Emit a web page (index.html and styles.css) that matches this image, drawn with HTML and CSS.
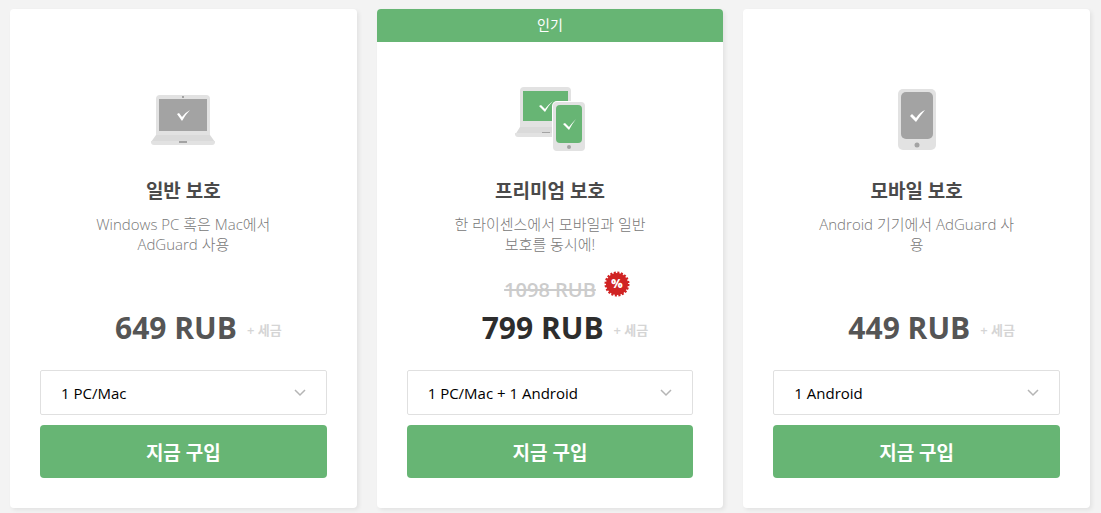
FILE: index.html
```
<!DOCTYPE html>
<html lang="ko">
<head>
    <meta charset="UTF-8">
    <meta name="viewport" content="width=device-width, initial-scale=1.0">
    <title>AdGuard</title>
    <link rel="stylesheet" href="styles.css">
</head>
<body>
    <main class="plans">
        <section class="plan">
            <form class="plan-body">
                <svg class="plan-icon" width="72" height="64" viewBox="0 0 72 64" aria-hidden="true">
                    <path fill="#e2e2e2" d="M9 50V12q0-4 4-4h46q4 0 4 4v38z"/>
                    <path fill="#dadada" d="M9 48h54l5 7H4z"/>
                    <path fill="#e2e2e2" d="M4 54h64v1q0 3-3 3H7q-3 0-3-3z"/>
                    <path fill="#a3a3a3" d="M12 12h48v32H12zM35 9h2v2h-2zM32 54h8v2h-8z"/>
                    <path fill="#fff" d="M30 27l2-1 3 4q4-5 8-7-4 4-8 11z"/>
                </svg>
                <h2>일반 보호</h2>
                <p class="description">Windows PC 혹은 Mac에서<br>AdGuard 사용</p>
                <div class="old-price"></div>
                <div class="price">649 RUB <small>+ 세금</small></div>
                <select aria-label="일반 보호">
                    <option>1 PC/Mac</option>
                </select>
                <button type="submit">지금 구입</button>
            </form>
        </section>

        <section class="plan popular">
            <div class="plan-label">인기</div>
            <form class="plan-body">
                <svg class="plan-icon" width="72" height="64" viewBox="0 0 72 64" aria-hidden="true">
                    <path fill="#e2e2e2" d="M6 42V4q0-4 4-4h43q4 0 4 4v38z"/>
                    <path fill="#dadada" d="M6 40h53v8H1z"/>
                    <path fill="#e2e2e2" d="M1 46h58v4H4q-3 0-3-3z"/>
                    <path fill="#67b574" d="M9 4h45v30H9z"/>
                    <path fill="#a3a3a3" d="M28 45h8v1h-8z"/>
                    <path fill="#fff" d="M25 19l2-1 4 4q4-5 8-8-5 5-8 11z"/>
                    <rect fill="#fff" x="38" y="14" width="34" height="50" rx="5"/>
                    <rect fill="#e2e2e2" x="39" y="15" width="32" height="49" rx="4"/>
                    <rect fill="#67b574" x="42" y="18" width="26" height="38" rx="4"/>
                    <circle fill="#a3a3a3" cx="55" cy="60" r="2"/>
                    <path fill="#fff" d="M49 37l2-1 4 4q4-5 7-8-4 5-7 11z"/>
                </svg>
                <h2>프리미엄 보호</h2>
                <p class="description">한 라이센스에서 모바일과 일반<br>보호를 동시에!</p>
                <div class="old-price">
                    <del>1098 RUB</del>
                    <span class="discount">
                        <svg width="26" height="26" viewBox="-13 -13 26 26" aria-hidden="true">
                            <circle fill="#d02323" r="11"/>
                            <circle fill="none" stroke="#d02323" stroke-width="3" stroke-dasharray="2 1.455" r="11"/>
                        </svg>
                        <b>%</b>
                    </span>
                </div>
                <div class="price">799 RUB <small>+ 세금</small></div>
                <select aria-label="프리미엄 보호">
                    <option>1 PC/Mac + 1 Android</option>
                </select>
                <button type="submit">지금 구입</button>
            </form>
        </section>

        <section class="plan">
            <form class="plan-body">
                <svg class="plan-icon" width="72" height="64" viewBox="0 0 72 64" aria-hidden="true">
                    <rect fill="#e2e2e2" x="17" y="2" width="38" height="61" rx="5"/>
                    <rect fill="#a3a3a3" x="20" y="5" width="32" height="47" rx="5"/>
                    <circle fill="#a3a3a3" cx="36" cy="58" r="2.5"/>
                    <path fill="#fff" d="M29 29l2-2 4 4q4-6 9-8-5 6-9 12z"/>
                </svg>
                <h2>모바일 보호</h2>
                <p class="description">Android 기기에서 AdGuard 사<br>용</p>
                <div class="old-price"></div>
                <div class="price">449 RUB <small>+ 세금</small></div>
                <select aria-label="모바일 보호">
                    <option>1 Android</option>
                </select>
                <button type="submit">지금 구입</button>
            </form>
        </section>
    </main>
</body>
</html>
```
FILE: styles.css
```
* {
    box-sizing: border-box;
}
body {
    margin: 0;
    background-color: #f3f3f3;
    color: #4a4a4a;
    font-family: "Open Sans", "Noto Sans CJK KR", sans-serif;
}
.plans {
    display: grid;
    grid-template-columns: repeat(3, 1fr);
    gap: 20px;
    padding: 9px 11px 5px 10px;
}
.plan {
    display: grid;
    grid-template-rows: 33px auto;
    background-color: #fff;
    border-radius: 4px;
    box-shadow: 2px 2px 4px rgba(0, 0, 0, .07);
    overflow: hidden;
}
.plan-label {
    background-color: #67b574;
    color: #fff;
    font-size: 14px;
    line-height: 32px;
    text-align: center;
}
.plan-body {
    grid-row: 2;
    display: flex;
    flex-direction: column;
    padding: 45px 30px 30px;
    text-align: center;
}
.plan-icon {
    align-self: center;
}
h2 {
    margin: 28px 0 11px;
    font-size: 19px;
    line-height: 24px;
}
.description {
    margin: 0 0 22px;
    color: #777;
    font-size: 15px;
    font-weight: 300;
    line-height: 20px;
}
.old-price {
    position: relative;
    align-self: center;
    height: 28px;
    color: #ccc;
    font-size: 20px;
    font-weight: 600;
    line-height: 28px;
}
.discount {
    position: absolute;
    left: 100%;
    top: -5px;
    display: grid;
    place-items: center;
    margin-left: 8px;
}
.discount svg,
.discount b {
    grid-area: 1 / 1;
}
.discount b {
    color: #fff;
    font-size: 12px;
    line-height: 16px;
}
.price {
    display: flex;
    justify-content: center;
    align-items: center;
    gap: 10px;
    height: 48px;
    margin-bottom: 18px;
    padding-left: 30px;
    color: #555;
    font-size: 30px;
    font-weight: 700;
    line-height: 48px;
}
.popular .price {
    color: #2d2d2d;
}
.price small {
    padding-top: 4px;
    color: #d5d5d5;
    font-size: 13px;
    font-weight: 600;
    line-height: 20px;
}
select {
    appearance: none;
    width: 100%;
    height: 45px;
    margin: 0 0 10px;
    padding: 0 40px 0 20px;
    border: 1px solid #e0e0e0;
    border-radius: 2px;
    background: #fff url("data:image/svg+xml,%3Csvg xmlns='http://www.w3.org/2000/svg' width='12' height='8'%3E%3Cpath d='M1 1l5 5 5-5' fill='none' stroke='%23b5b5b5' stroke-width='1.5'/%3E%3C/svg%3E") no-repeat right 20px center;
    color: #000;
    font: 15px "Open Sans", "Noto Sans CJK KR", sans-serif;
}
button {
    height: 53px;
    border: none;
    border-radius: 4px;
    background-color: #67b574;
    color: #fff;
    font: bold 19px "Open Sans", "Noto Sans CJK KR", sans-serif;
    cursor: pointer;
}
button:hover {
    background-color: #5aa667;
}
```
